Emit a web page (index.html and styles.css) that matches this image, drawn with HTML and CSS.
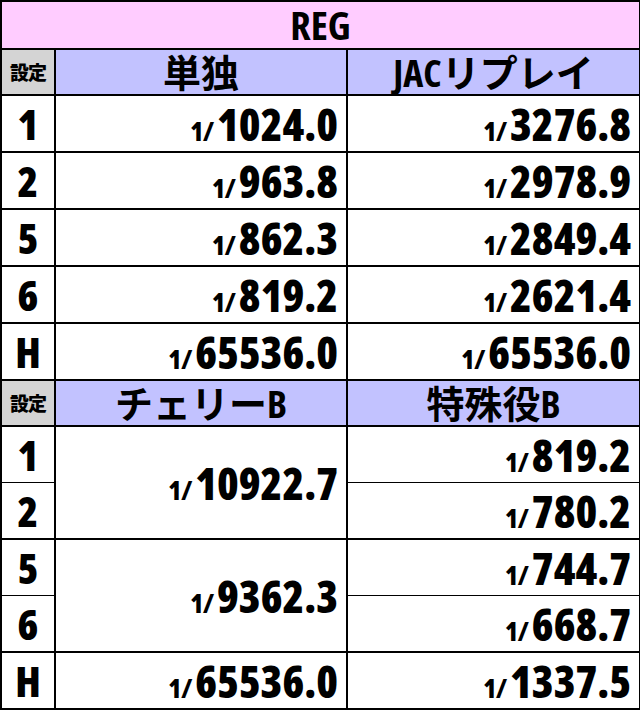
FILE: index.html
```html
<!DOCTYPE html>
<html lang="ja">
<head>
<meta charset="utf-8">
<link rel="stylesheet" href="styles.css">
</head>
<body>
<table class="odds">
  <colgroup>
    <col class="c-set">
    <col class="c-a">
    <col class="c-b">
  </colgroup>
  <tr class="r-title"><th colspan="3" class="title">REG</th></tr>
  <tr class="r-head">
    <th class="set">設定</th>
    <th class="col">単独</th>
    <th class="col">JACリプレイ</th>
  </tr>
  <tr class="r-row"><td class="lbl">1</td><td class="val"><span class="pre">1/</span>1024.0</td><td class="val"><span class="pre">1/</span>3276.8</td></tr>
  <tr class="r-row"><td class="lbl">2</td><td class="val"><span class="pre">1/</span>963.8</td><td class="val"><span class="pre">1/</span>2978.9</td></tr>
  <tr class="r-row"><td class="lbl">5</td><td class="val"><span class="pre">1/</span>862.3</td><td class="val"><span class="pre">1/</span>2849.4</td></tr>
  <tr class="r-row"><td class="lbl">6</td><td class="val"><span class="pre">1/</span>819.2</td><td class="val"><span class="pre">1/</span>2621.4</td></tr>
  <tr class="r-row"><td class="lbl">H</td><td class="val"><span class="pre">1/</span>65536.0</td><td class="val"><span class="pre">1/</span>65536.0</td></tr>
  <tr class="r-head">
    <th class="set">設定</th>
    <th class="col">チェリーB</th>
    <th class="col">特殊役B</th>
  </tr>
  <tr class="r-row top"><td class="lbl">1</td><td class="val mid" rowspan="2"><span class="pre">1/</span>10922.7</td><td class="val"><span class="pre">1/</span>819.2</td></tr>
  <tr class="r-row bot"><td class="lbl">2</td><td class="val"><span class="pre">1/</span>780.2</td></tr>
  <tr class="r-row top"><td class="lbl">5</td><td class="val mid" rowspan="2"><span class="pre">1/</span>9362.3</td><td class="val"><span class="pre">1/</span>744.7</td></tr>
  <tr class="r-row bot"><td class="lbl">6</td><td class="val"><span class="pre">1/</span>668.7</td></tr>
  <tr class="r-row"><td class="lbl">H</td><td class="val"><span class="pre">1/</span>65536.0</td><td class="val"><span class="pre">1/</span>1337.5</td></tr>
</table>
</body>
</html>
```
FILE: styles.css
```css
html, body {
  margin: 0;
  padding: 0;
  background: #ffffff;
}
.odds {
  border-collapse: collapse;
  width: 639px;
  table-layout: fixed;
  font-family: "Open Sans", "Noto Sans CJK JP", sans-serif;
  font-stretch: 85%;
  font-weight: 700;
  color: #000;
}
.c-set { width: 54px; }
.c-a { width: 292px; }
.c-b { width: 293px; }
.odds th, .odds td {
  border: 2px solid #000;
  padding: 0;
  white-space: nowrap;
}
.title {
  background: #ffccff;
  height: 46px;
  font-size: 40px;
  line-height: 1;
  text-align: center;
}
.r-head th {
  height: 44px;
  line-height: 44px;
}
.set {
  background: #d4d4d4;
  font-family: "Noto Sans CJK JP", sans-serif;
  font-weight: 900;
  font-size: 19px;
  text-align: center;
  letter-spacing: -1px;
}
.col {
  background: #c2c2ff;
  font-family: "Open Sans", "Noto Sans CJK JP", sans-serif;
  font-size: 38px;
  text-align: center;
}
.r-row td {
  height: 55px;
}
.lbl {
  font-size: 42px;
  font-weight: 800;
  text-align: center;
  line-height: 1;
}
.val {
  font-size: 44px;
  font-weight: 800;
  text-align: right;
  padding-right: 8px !important;
  line-height: 1;
}
.pre {
  font-size: 26px;
  margin-right: 3px;
}
.top td.lbl, .top td.val:not(.mid) {
  border-bottom-width: 1px;
}
.bot td {
  border-top-width: 1px;
}
```
